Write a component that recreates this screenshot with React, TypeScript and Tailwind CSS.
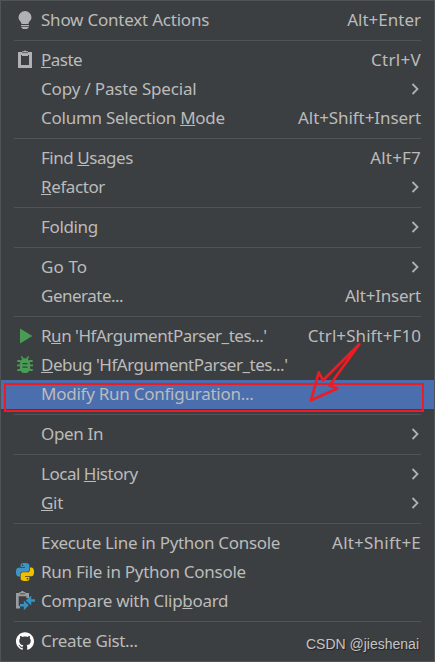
import { Fragment } from "react";
import type { ReactNode } from "react";
import clsx from "clsx";
import { SiGithub } from "react-icons/si";

type MenuItem = {
  label: string;
  mnemonic?: number;
  shortcut?: string;
  submenu?: boolean;
  icon?: ReactNode;
  selected?: boolean;
  tracking: string;
  shortcutTracking?: string;
};

const pythonHalf =
  "M14.25.18l.9.2.73.26.59.3.45.32.34.34.25.34.16.33.1.3.04.26.02.2-.01.13V8.5l-.05.63-.13.55-.21.46-.26.38-.3.31-.33.25-.35.19-.35.14-.33.1-.3.07-.26.04-.21.02H8.77l-.69.05-.59.14-.5.22-.41.27-.33.32-.27.35-.2.36-.15.37-.1.35-.07.32-.04.27-.02.21v3.06H3.17l-.21-.03-.28-.07-.32-.12-.35-.18-.36-.26-.36-.36-.35-.46-.32-.59-.28-.73-.21-.88-.14-1.05-.05-1.23.06-1.22.16-1.04.24-.87.32-.71.36-.57.4-.44.42-.33.42-.24.4-.16.36-.1.32-.05.24-.01h.16l.06.01h8.16v-.83H6.18l-.01-2.75-.02-.37.05-.34.11-.31.17-.28.25-.26.31-.23.38-.2.44-.18.51-.15.58-.12.64-.1.71-.06.77-.04.84-.02 1.27.05zm-6.3 1.98l-.23.33-.08.41.08.41.23.34.33.22.41.09.41-.09.33-.22.23-.34.08-.41-.08-.41-.23-.33-.33-.22-.41-.09-.41.09z";

function BulbIcon() {
  return (
    <svg viewBox="0 0 20 20" className="size-5" fill="#afb1b3">
      <path d="M10 1a6.5 6.5 0 0 0-6.5 6.5c0 2.8 2.8 4 3 6.5h7c.2-2.5 3-3.7 3-6.5A6.5 6.5 0 0 0 10 1z" />
      <path d="M6 15h8v1.3H6zM6.5 17h7v1h-7zM7.5 18h5v1h-5z" />
    </svg>
  );
}

function PasteIcon() {
  return (
    <svg viewBox="0 0 20 20" className="size-5" fill="#afb1b3">
      <path
        fillRule="evenodd"
        d="M3 2h4V1.2h1.8a1.3 1.3 0 0 1 2.4 0H13V2h4v16H3zm3 3v10h8V5h-1v1H7V5z"
      />
      <path d="M7 2.6h6" stroke="#3c3f41" strokeWidth="0.7" />
    </svg>
  );
}

function RunIcon() {
  return (
    <svg viewBox="0 0 20 20" className="size-5" fill="#499c54">
      <path d="M5 2.5v15L17.3 10z" />
    </svg>
  );
}

function BugIcon() {
  return (
    <svg viewBox="0 0 20 20" className="size-5" fill="none" stroke="#499c54">
      <path d="M6.3 1.4 8.3 4M13.7 1.4 11.7 4" strokeWidth="1.6" />
      <path d="M2.3 6h2.4l2 1.2M17.7 6h-2.4l-2 1.2M2 10.4h16M2.3 15h2.4l2-1.4M17.7 15h-2.4l-2-1.4" strokeWidth="1.9" />
      <path
        d="M10 3.2c2.2 0 3.7 1.1 4.2 3 .6.8.9 1.8.9 3.8v3.2c0 3-2.1 4.9-5.1 4.9s-5.1-1.9-5.1-4.9V10c0-2 .3-3 .9-3.8.5-1.9 2-3 4.2-3z"
        fill="#499c54"
        stroke="none"
      />
      <path d="M7.5 8.7h5M7.5 12.2h5" stroke="#3c3f41" strokeWidth="1.3" />
    </svg>
  );
}

function PythonIcon() {
  return (
    <svg viewBox="0 0 24 24" className="size-[18px]">
      <path d={pythonHalf} fill="#3e95c3" />
      <path d={pythonHalf} fill="#f0c000" transform="rotate(180 12 12)" />
    </svg>
  );
}

function CompareIcon() {
  return (
    <svg viewBox="0 0 20 20" className="size-5">
      <path d="M1 2h3.4V.9h1.8a1.2 1.2 0 0 1 2.4 0h1.8V2H14v5h-2.6V5.2H3.7V15H5v2.6H1z" fill="#9a9da0" />
      <path d="M5 2.8h5" stroke="#3c3f41" strokeWidth="0.8" />
      <path d="M16.2 4.6v3.6H20v2.6h-3.8v3.6L10.8 9.5zM8.8 9.6l5 4.7-5 4.9v-3.7H5v-2.4h3.8z" fill="#3592c4" />
    </svg>
  );
}

const groups: MenuItem[][] = [
  [{ label: "Show Context Actions", shortcut: "Alt+Enter", icon: <BulbIcon />, tracking: "tracking-[-0.22px]" }],
  [
    {
      label: "Paste",
      mnemonic: 0,
      shortcut: "Ctrl+V",
      icon: <PasteIcon />,
      tracking: "tracking-[-0.5px]",
      shortcutTracking: "tracking-[0.3px]",
    },
    { label: "Copy / Paste Special", submenu: true, tracking: "tracking-[-0.17px]" },
    {
      label: "Column Selection Mode",
      mnemonic: 17,
      shortcut: "Alt+Shift+Insert",
      tracking: "tracking-[-0.26px]",
      shortcutTracking: "tracking-[-0.08px]",
    },
  ],
  [
    {
      label: "Find Usages",
      mnemonic: 5,
      shortcut: "Alt+F7",
      tracking: "tracking-[-0.45px]",
      shortcutTracking: "tracking-[0.2px]",
    },
    { label: "Refactor", mnemonic: 0, submenu: true, tracking: "tracking-[-0.4px]" },
  ],
  [{ label: "Folding", submenu: true, tracking: "tracking-[-0.35px]" }],
  [
    { label: "Go To", submenu: true, tracking: "tracking-[0.1px]" },
    {
      label: "Generate...",
      shortcut: "Alt+Insert",
      tracking: "tracking-[-0.5px]",
      shortcutTracking: "tracking-[-0.22px]",
    },
  ],
  [
    {
      label: "Run 'HfArgumentParser_tes...'",
      mnemonic: 1,
      shortcut: "Ctrl+Shift+F10",
      icon: <RunIcon />,
      tracking: "tracking-[-0.48px]",
      shortcutTracking: "tracking-[0.07px]",
    },
    {
      label: "Debug 'HfArgumentParser_tes...'",
      mnemonic: 0,
      icon: <BugIcon />,
      tracking: "tracking-[-0.48px]",
    },
    { label: "Modify Run Configuration...", selected: true, tracking: "tracking-[-0.25px]" },
  ],
  [{ label: "Open In", submenu: true, tracking: "tracking-[-0.35px]" }],
  [
    { label: "Local History", mnemonic: 6, submenu: true, tracking: "tracking-[-0.48px]" },
    { label: "Git", mnemonic: 0, submenu: true, tracking: "tracking-[-0.3px]" },
  ],
  [
    {
      label: "Execute Line in Python Console",
      shortcut: "Alt+Shift+E",
      tracking: "tracking-[-0.31px]",
      shortcutTracking: "tracking-[0.22px]",
    },
    { label: "Run File in Python Console", icon: <PythonIcon />, tracking: "tracking-[-0.26px]" },
    { label: "Compare with Clipboard", mnemonic: 17, icon: <CompareIcon />, tracking: "tracking-[-0.3px]" },
  ],
  [
    {
      label: "Create Gist...",
      icon: <SiGithub className="size-[18px] text-white" />,
      tracking: "tracking-[-0.33px]",
    },
  ],
];

function Label({ text, mnemonic }: { text: string; mnemonic?: number }) {
  if (mnemonic === undefined) return <>{text}</>;
  return (
    <>
      {text.slice(0, mnemonic)}
      <span className="underline decoration-1 underline-offset-[1px]">{text[mnemonic]}</span>
      {text.slice(mnemonic + 1)}
    </>
  );
}

function MenuRow({ item }: { item: MenuItem }) {
  return (
    <div className={clsx("flex h-[29px] items-center pr-[13px] pl-[14px]", item.selected && "bg-[#4b6eaf]")}>
      <span className="flex w-5 shrink-0 items-center justify-center pb-px">{item.icon}</span>
      <span className={clsx("ml-1.5 grow pb-0.5 whitespace-pre", item.tracking)}>
        <Label text={item.label} mnemonic={item.mnemonic} />
      </span>
      {item.shortcut && <span className={clsx("pb-0.5 whitespace-pre", item.shortcutTracking)}>{item.shortcut}</span>}
      {item.submenu && (
        <svg viewBox="0 0 8 12" className="mr-0.5 mb-0.5 h-3 w-2" fill="none" stroke="#afb1b3" strokeWidth="1.8">
          <path d="M1.5 1 6.5 6l-5 5" />
        </svg>
      )}
    </div>
  );
}

export default function App() {
  return (
    <div className="relative h-[662px] w-[435px] overflow-hidden border border-[#515456] bg-[#3c3f41] pt-[5px] font-['Noto_Sans',sans-serif] text-[17px] leading-[29px] text-[#bbbbbb]">
      {groups.map((group, index) => (
        <Fragment key={group[0].label}>
          {index > 0 && <div className="mx-[13px] my-[5px] h-px bg-[#515456]" />}
          {group.map((item) => (
            <MenuRow key={item.label} item={item} />
          ))}
        </Fragment>
      ))}

      {/* hand drawn highlight and arrow */}
      <div className="absolute top-[382px] left-[3px] h-[29px] w-[420px] border-2 border-[#ed1c24]" />
      <svg
        viewBox="300 335 70 75"
        className="absolute top-[334px] left-[299px] h-[75px] w-[70px]"
        fill="none"
        stroke="#ed1c24"
        strokeWidth="2.7"
        strokeLinejoin="round"
      >
        <path d="M359.3 344.3 323 380.2 318.7 372.5 311 400.3 337.3 388.5 329.5 385.5z" />
      </svg>

      <span className="absolute right-[15px] bottom-[7px] font-['Liberation_Sans',sans-serif] text-[14px] leading-5 text-[#c4c5c6] [text-shadow:1px_1px_1px_#222]">
        CSDN @jieshenai
      </span>
    </div>
  );
}
